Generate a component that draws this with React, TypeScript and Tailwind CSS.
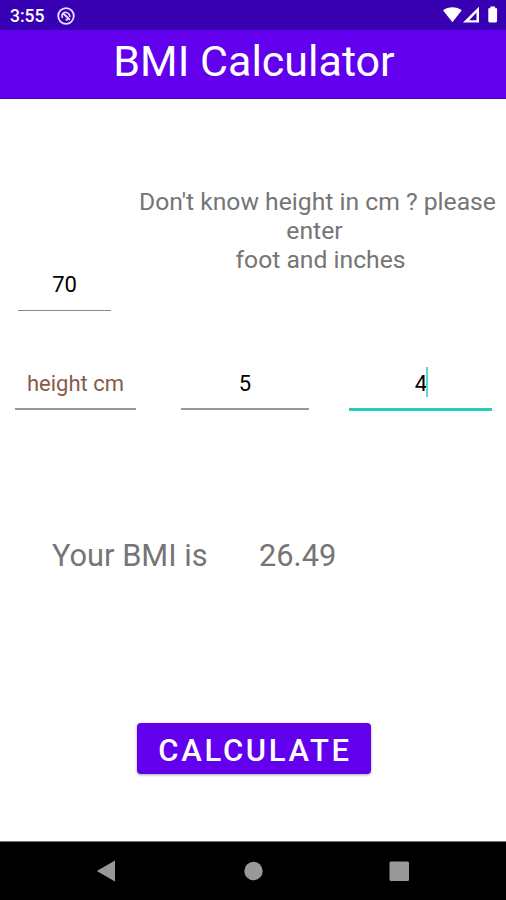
import React from "react";

function StatusBar() {
  return (
    <div className="flex h-[30px] items-center bg-[#3700b3] pl-[10px] pr-[7px] text-white">
      <span className="mt-[2px] w-[47px] text-[17.500px] leading-[20px] font-medium whitespace-nowrap">3:55</span>
      <svg className="mt-px" width="18" height="18" viewBox="0 0 18 18" fill="none" stroke="#e9e0ff">
        <circle cx="9" cy="9" r="7.8" strokeWidth="1.8" />
        <path d="M5.600 11A4 4 0 0 1 6 6.300A4.200 4.200 0 0 1 12.800 10" strokeWidth="1.500" />
        <path d="M6 6.300l6.800 6.500M8.600 12.600H11" strokeWidth="1.900" />
      </svg>
      <svg className="ml-auto" width="58" height="20" viewBox="0 0 58 20" fill="#fff">
        <path d="M2 5.200C7.200 1.200 15.600 1.200 20.800 5.200L11.400 17.300z" />
        <path fillRule="evenodd" d="M22 17.500L38 1.700V17.500zM35.500 7.500L28.200 15.200H35.500z" />
        <path d="M47.300 3.200h2V1.500h4.800v1.700h2v12.900a1.400 1.400 0 0 1-1.400 1.400h-6a1.400 1.400 0 0 1-1.400-1.400z" />
      </svg>
    </div>
  );
}

function Field({ children, className }: { children: React.ReactNode; className: string }) {
  return (
    <div className={`flex items-start justify-center pt-px text-[22px] leading-[26px] whitespace-nowrap ${className}`}>
      {children}
    </div>
  );
}

export default function App() {
  return (
    <div className="flex h-[900px] w-[506px] flex-col overflow-hidden bg-white font-[Roboto,sans-serif]">
      <StatusBar />
      <header className="flex h-[69px] justify-center border-b border-[#4a00c4] bg-[#6200ee] pt-[5px] pl-[2px] text-[43px] leading-[52px] whitespace-nowrap text-white">
        <h1>BMI Calculator</h1>
      </header>

      <main className="flex flex-1 flex-col">
        <section className="flex h-[212px] items-end pl-[18px]">
          <Field className="h-[40px] w-[93px] border-b border-[#888] text-black">70</Field>
          <p className="mb-[37px] ml-[23px] w-[367px] text-center text-[24.700px] leading-[29px] text-[#757575]">
            Don't know height in cm ? please
            <br />
            <span className="relative -left-[3px] block">enter</span>
            <span className="relative left-[3px] block">foot and inches</span>
          </p>
        </section>

        <section className="mt-[59px] flex h-[41px] items-start pl-[15px]">
          <Field className="h-[40px] w-[121px] border-b-2 border-[#999] text-[#8a5a48]">height cm</Field>
          <Field className="ml-[45px] h-[40px] w-[128px] border-b-2 border-[#999] text-black">5</Field>
          <Field className="ml-[40px] h-[41px] w-[143px] border-b-[3px] border-[#26cdb8] text-black">
            <span className="pl-[2px]">4</span>
            <span className="-mt-[4px] -ml-px h-[30px] w-[2px] bg-[#5cdcc8]" />
          </Field>
        </section>

        <section className="mt-[127px] flex h-[36px] pl-[52px] text-[30.800px] leading-[36px] whitespace-nowrap text-[#757575]">
          <span className="w-[207px]">Your BMI is</span>
          <span>26.49</span>
        </section>

        <button className="mt-[149px] ml-[137px] h-[51px] w-[234px] rounded-[4px] bg-[#6200ee] pt-[4px] pl-[2px] text-[31px] leading-[47px] font-medium tracking-[2.700px] whitespace-nowrap text-white shadow-[0_1px_3px_rgba(0,0,0,0.35)]">
          CALCULATE
        </button>
      </main>

      <nav className="flex h-[59px] items-center border-t border-[#777] bg-black pl-[96px]">
        <svg width="315" height="22" viewBox="0 0 315 22" fill="#999">
          <path d="M.8 11L19 .5v21z" />
          <circle cx="157.500" cy="11" r="9.200" />
          <rect x="293.500" y="1.500" width="19.500" height="19.500" rx="1.500" />
        </svg>
      </nav>
    </div>
  );
}
